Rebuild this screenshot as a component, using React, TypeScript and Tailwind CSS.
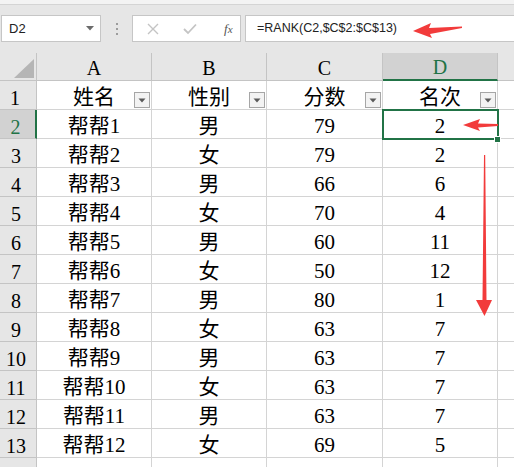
import React from "react";

const rows: [string, string, string, string][] = [
  ["帮帮1", "男", "79", "2"],
  ["帮帮2", "女", "79", "2"],
  ["帮帮3", "男", "66", "6"],
  ["帮帮4", "女", "70", "4"],
  ["帮帮5", "男", "60", "11"],
  ["帮帮6", "女", "50", "12"],
  ["帮帮7", "男", "80", "1"],
  ["帮帮8", "女", "63", "7"],
  ["帮帮9", "男", "63", "7"],
  ["帮帮10", "女", "63", "7"],
  ["帮帮11", "男", "63", "7"],
  ["帮帮12", "女", "69", "5"],
];

const cellFont = {
  fontFamily: '"Liberation Serif", "Noto Sans CJK SC", serif',
};

function FilterBtn() {
  return (
    <div className="absolute right-[1px] bottom-[1px] w-[16px] h-[16px] border border-[#a6a6a6] bg-[#f3f3f3] flex items-center justify-center">
      <svg width="8" height="5" viewBox="0 0 8 5">
        <path d="M0.5 0.5 L7.5 0.5 L4 4.5 Z" fill="#5a5a5a" />
      </svg>
    </div>
  );
}

const colW = ["w-[115px]", "w-[115px]", "w-[116px]", "w-[115px]"];

export default function App() {
  return (
    <div className="relative w-[514px] h-[467px] overflow-hidden bg-[#e6e6e6]">
      {/* Top toolbar */}
      <div className="h-[5px] bg-[#f3f3f3] border-b border-[#d4d4d4]" />
      <div className="h-[48px] flex items-start pt-[10px]">
        <div className="ml-[1px] w-[100px] h-[27px] bg-white border border-[#c6c6c6] flex items-center justify-between pl-[7px] pr-[6px]">
          <span className="text-[13px] text-[#222]" style={{ fontFamily: '"Liberation Sans", sans-serif' }}>D2</span>
          <svg width="8" height="5" viewBox="0 0 8 5">
            <path d="M0 0 L8 0 L4 4.5 Z" fill="#6b6b6b" />
          </svg>
        </div>
        <div className="w-[31px] h-[27px] flex flex-col items-center justify-center gap-[3px]">
          <div className="w-[2px] h-[2px] bg-[#9c9c9c]" />
          <div className="w-[2px] h-[2px] bg-[#9c9c9c]" />
          <div className="w-[2px] h-[2px] bg-[#9c9c9c]" />
        </div>
        <div className="w-[109px] h-[27px] bg-white border border-[#c6c6c6] flex items-center">
          <svg className="ml-[14px]" width="12" height="12" viewBox="0 0 12 12">
            <path d="M1 1 L11 11 M11 1 L1 11" stroke="#c4c4c4" strokeWidth="1.4" />
          </svg>
          <svg className="ml-[24px]" width="14" height="12" viewBox="0 0 14 12">
            <path d="M1 6 L5 10 L13 1.5" stroke="#c4c4c4" strokeWidth="1.8" fill="none" />
          </svg>
          <span
            className="ml-[27px] text-[13px] italic text-[#555]"
            style={{ fontFamily: '"Liberation Serif", serif' }}
          >
            f<span className="text-[11px]">x</span>
          </span>
        </div>
        <div className="ml-[4px] flex-1 h-[27px] bg-white border border-r-0 border-[#c6c6c6] flex items-center pl-[11px]">
          <span className="text-[12.5px] text-[#222]" style={{ fontFamily: '"Liberation Sans", sans-serif' }}>
            =RANK(C2,$C$2:$C$13)
          </span>
        </div>
      </div>

      {/* Column headers */}
      <div className="flex h-[28px]" style={cellFont}>
        <div className="relative w-[37px] h-full border-r border-b border-[#c4c4c4] bg-[#e6e6e6]">
          <svg className="absolute left-[14px] top-[6px]" width="20" height="19" viewBox="0 0 20 19">
            <path d="M20 0 L20 19 L0 19 Z" fill="#b5b5b5" />
          </svg>
        </div>
        {["A", "B", "C", "D"].map((c, i) => (
          <div
            key={c}
            className={`${colW[i]} h-full flex items-center justify-center pt-[2px] text-[20px] ${
              c === "D"
                ? "bg-[#d2d2d2] text-[#217346] border-r border-[#c4c4c4] border-b-2 border-b-[#217346]"
                : "bg-[#e6e6e6] text-black border-r border-b border-[#c4c4c4]"
            }`}
          >
            {c}
          </div>
        ))}
        <div className="flex-1 h-full border-b border-[#c4c4c4]" />
      </div>

      {/* Header row 1 */}
      <div className="flex h-[29px]" style={cellFont}>
        <div className="w-[37px] h-full border-r border-b border-[#c4c4c4] flex items-center justify-center pt-[6px] text-[20px] text-black bg-[#e6e6e6] pr-[6px]">
          1
        </div>
        {["姓名", "性别", "分数", "名次"].map((t, i) => (
          <div
            key={t}
            className={`${colW[i]} relative h-full bg-white border-r border-b border-[#d4d4d4] flex items-center justify-center pt-[6px] text-[21px] text-black`}
          >
            {t}
            <FilterBtn />
          </div>
        ))}
        <div className="flex-1 h-full bg-white border-b border-[#d4d4d4]" />
      </div>

      {rows.map((r, idx) => {
        const n = idx + 2;
        const sel = n === 2;
        return (
          <div key={n} className="flex h-[29px]" style={cellFont}>
            <div
              className={`w-[37px] h-full border-b flex items-center justify-center pt-[6px] text-[20px] pr-[4px] ${
                sel
                  ? "bg-[#d2d2d2] text-[#217346] border-r-2 border-r-[#217346] border-b-[#c4c4c4]"
                  : "bg-[#e6e6e6] text-black border-r border-[#c4c4c4]"
              }`}
            >
              {n}
            </div>
            {r.map((t, i) => (
              <div
                key={i}
                className={`${colW[i]} h-full bg-white border-r border-b border-[#d4d4d4] flex items-center justify-center pt-[6px] text-[21px] text-black`}
              >
                {t}
              </div>
            ))}
            <div className="flex-1 h-full bg-white border-b border-[#d4d4d4]" />
          </div>
        );
      })}
      <div className="flex h-[29px]">
        <div className="w-[37px] h-full border-r border-[#c4c4c4] bg-[#e6e6e6]" />
        {colW.map((w, i) => (
          <div key={i} className={`${w} h-full bg-white border-r border-[#d4d4d4]`} />
        ))}
        <div className="flex-1 h-full bg-white" />
      </div>

      {/* Selection box */}
      <div className="absolute left-[382px] top-[109px] w-[117px] h-[31px] border-2 border-[#217346]" />
      <div className="absolute left-[494px] top-[136px] w-[7px] h-[7px] bg-[#217346] border border-white" />

      {/* Red arrows */}
      <svg className="absolute left-0 top-0 pointer-events-none" width="514" height="467" viewBox="0 0 514 467">
        <path d="M413 31 L431 23 L429 28 L462 26.5 L462 28 L430 34 L432 38 Z" fill="#f23b3b" />
        <path d="M463 125 L480 119 L478 123.5 L498 124 L498 126 L478 127.5 L480 131 Z" fill="#f23b3b" />
        <path d="M484 155 L485.2 155 L486.5 300 L492 300 L484.5 316 L476 300 L482.5 300 Z" fill="#f23b3b" />
      </svg>
    </div>
  );
}
